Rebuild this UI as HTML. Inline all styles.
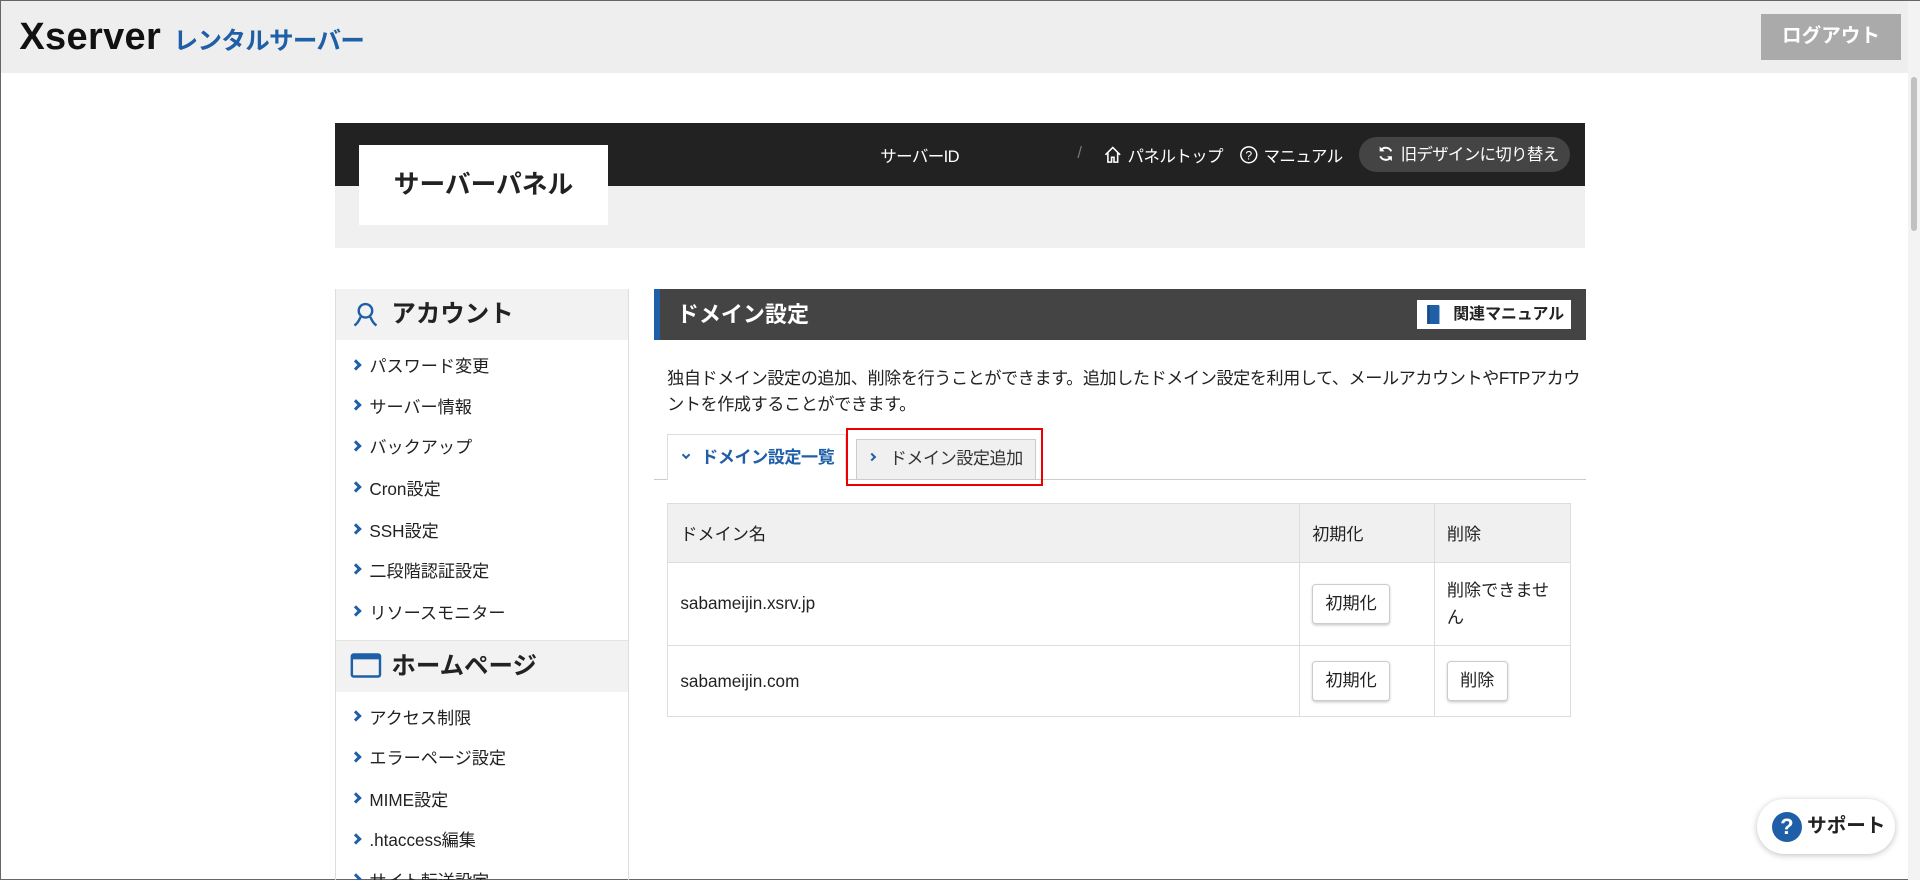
<!DOCTYPE html>
<html><head><meta charset="utf-8">
<style>
html{zoom:1.2245;overflow:hidden}
*{box-sizing:border-box;margin:0;padding:0}
body{width:1568px;height:719px;overflow:hidden;position:relative;background:#fff;font-family:"Liberation Sans","Noto Sans CJK JP",sans-serif;color:#222;border:1px solid #666}
.a{position:absolute;white-space:nowrap}
.hdr{left:0;top:0;width:1568px;height:59px;background:#eee}
.logo{left:15px;top:12px;font-size:31px;font-weight:bold;color:#111;letter-spacing:0.3px}
.logo2{left:141px;top:17px;font-size:20px;font-weight:bold;color:#1f5fa8;letter-spacing:-0.5px}
.logout{left:1437px;top:11px;width:115px;height:37px;background:#aaa;color:#fff;font-weight:bold;font-size:16px;text-align:center;line-height:37px}
.scroll{left:1557px;top:0;width:10px;height:719px;background:#f3f3f3}
.thumb{left:1560px;top:62px;width:5px;height:126px;background:#c1c1c1;border-radius:3px}
.dark{left:273px;top:100px;width:1021px;height:51px;background:#222}
.lg{left:273px;top:151px;width:1021px;height:51px;background:#f0f0f0}
.sp{left:292px;top:118px;width:204px;height:65px;background:#fff;font-size:21px;font-weight:bold;text-align:center;line-height:66px;color:#222}
.nav{color:#fff;font-size:13.5px;top:116px;letter-spacing:-0.5px}
.oldbtn{left:1109px;top:111px;width:172px;height:29px;background:#444;border-radius:15px;color:#fff;font-size:13.5px;line-height:29px;padding-left:34px;letter-spacing:-0.6px}
.side{left:273px;top:235px;width:240px;height:500px;border:1px solid #ddd;border-top:none}
.sh{position:absolute;left:0;width:238px;height:42px;background:#f2f2f2;font-size:20px;font-weight:bold;line-height:42px;padding-left:45px}
.it{position:absolute;left:27px;font-size:14px;color:#222;white-space:nowrap}
.it:before{content:"";position:absolute;left-14px;left:-14px;top:7px;width:4px;height:4px;border-right:2.5px solid #1f5fa8;border-bottom:2.5px solid #1f5fa8;transform:rotate(-45deg)}
.title{left:533px;top:235px;width:761px;height:42px;background:#444;border-left:5px solid #1f5fa8;color:#fff;font-size:18px;font-weight:bold;line-height:42px;padding-left:14px}
.man{left:1156px;top:244px;width:126px;height:24px;background:#fff;font-size:13px;font-weight:bold;line-height:24px;padding-left:30px;color:#222}
.desc{left:544px;top:298px;width:748px;font-size:14px;line-height:21px;color:#222;letter-spacing:-0.35px;white-space:normal}
.tab1{left:544px;top:354px;width:146px;height:37px;background:#fff;border:1px solid #ddd;border-bottom:none;color:#1f5fa8;font-weight:bold;font-size:14px;line-height:36px;padding-left:27px;letter-spacing:-0.4px}
.tab2{left:698px;top:358px;width:147px;height:32px;background:#f0f0f0;border:1px solid #ccc;border-bottom:none;font-size:14px;line-height:31px;padding-left:27px;color:#333;letter-spacing:-0.4px}
.tline{left:533px;top:390px;width:761px;height:1px;background:#ccc}
.red{left:690px;top:349px;width:161px;height:47px;border:2px solid #e00}
table{position:absolute;left:544px;top:410px;width:738px;border-collapse:collapse;font-size:14px}
td{border:1px solid #ddd;padding:0 10px;vertical-align:middle;color:#222}
.btn{display:inline-block;border:1px solid #ccc;border-radius:3px;background:#fff;box-shadow:0 1px 2px rgba(0,0,0,.2);height:32px;line-height:30px;padding:0 10px;font-size:14px}
.sup{left:1434px;top:652px;width:113px;height:45px;background:#fff;border-radius:23px;box-shadow:0 1px 5px rgba(0,0,0,.25);font-size:16px;font-weight:bold;line-height:45px;padding-left:41px}
.q{position:absolute;left:12px;top:10px;width:25px;height:25px;border-radius:50%;background:#1f5fa8;color:#fff;font-size:18px;line-height:25px;text-align:center}
</style></head><body>
<div class="a hdr"></div>
<div class="a logo">Xserver</div>
<div class="a logo2">レンタルサーバー</div>
<div class="a logout">ログアウト</div>
<div class="a scroll"></div><div class="a thumb"></div>

<div class="a dark"></div>
<div class="a lg"></div>
<div class="a sp">サーバーパネル</div>
<div class="a nav" style="left:718px">サーバーID</div>
<div class="a nav" style="left:879px;color:#777">/</div>
<svg class="a" style="left:900px;top:118px" width="16" height="16" viewBox="0 0 16 16"><path d="M2 8 L8 2 L14 8 M4 6.5 V14 H7 V10 H9 V14 H12 V6.5" fill="none" stroke="#fff" stroke-width="1.3"/></svg>
<div class="a nav" style="left:920px">パネルトップ</div>
<svg class="a" style="left:1011px;top:118px" width="16" height="16" viewBox="0 0 16 16"><circle cx="8" cy="8" r="6.5" fill="none" stroke="#fff" stroke-width="1.2"/><text x="8" y="12" font-size="10" fill="#fff" text-anchor="middle" font-family="Liberation Sans">?</text></svg>
<div class="a nav" style="left:1031px">マニュアル</div>
<div class="a oldbtn">旧デザインに切り替え</div>
<svg class="a" style="left:1123px;top:117px" width="16" height="16" viewBox="0 0 16 16"><path d="M12.5 6 A5 5 0 0 0 4 5 M3.5 10 A5 5 0 0 0 12 11" fill="none" stroke="#fff" stroke-width="1.6"/><path d="M3 2 V6 H7 Z M13 14 V10 H9 Z" fill="#fff"/></svg>

<div class="a side">
 <div class="sh" style="top:0">アカウント</div>
 <svg style="position:absolute;left:13px;top:10px" width="22" height="22" viewBox="0 0 22 22"><circle cx="11" cy="8" r="5.5" fill="none" stroke="#1f5fa8" stroke-width="2"/><path d="M7 13 Q5 18 2 20 M15 13 Q17 18 20 20" fill="none" stroke="#1f5fa8" stroke-width="2"/></svg>
 <div class="it" style="top:52px">パスワード変更</div>
 <div class="it" style="top:85px">サーバー情報</div>
 <div class="it" style="top:118px">バックアップ</div>
 <div class="it" style="top:152px">Cron設定</div>
 <div class="it" style="top:186px">SSH設定</div>
 <div class="it" style="top:219px">二段階認証設定</div>
 <div class="it" style="top:253px">リソースモニター</div>
 <div class="sh" style="top:287px;border-top:1px solid #e4e4e4">ホームページ</div>
 <svg style="position:absolute;left:11px;top:297px" width="26" height="22" viewBox="0 0 26 22"><rect x="1.5" y="2" width="23" height="18" rx="1.5" fill="none" stroke="#1f5fa8" stroke-width="2"/><rect x="1.5" y="2" width="23" height="4" fill="#1f5fa8"/></svg>
 <div class="it" style="top:339px">アクセス制限</div>
 <div class="it" style="top:372px">エラーページ設定</div>
 <div class="it" style="top:406px">MIME設定</div>
 <div class="it" style="top:439px">.htaccess編集</div>
 <div class="it" style="top:472px">サイト転送設定</div>
</div>

<div class="a title">ドメイン設定</div>
<div class="a man">関連マニュアル</div>
<svg class="a" style="left:1164px;top:248px" width="12" height="16" viewBox="0 0 12 16"><rect x="1" y="0" width="10" height="16" rx="1" fill="#1f5fa8"/><rect x="1" y="0" width="2" height="16" fill="#174a85"/></svg>
<div class="a desc">独自ドメイン設定の追加、削除を行うことができます。追加したドメイン設定を利用して、メールアカウントやFTPアカウントを作成することができます。</div>
<div class="a tline"></div>
<div class="a tab1">ドメイン設定一覧</div>
<div class="a" style="left:557px;top:368px;width:5px;height:5px;border-right:2px solid #1f5fa8;border-bottom:2px solid #1f5fa8;transform:rotate(45deg)"></div>
<div class="a tab2">ドメイン設定追加</div>
<div class="a" style="left:709px;top:370px;width:5px;height:5px;border-right:2px solid #1f5fa8;border-bottom:2px solid #1f5fa8;transform:rotate(-45deg)"></div>
<div class="a red"></div>

<table>
<tr style="height:48px;background:#f0f0f0"><td style="width:516px">ドメイン名</td><td style="width:110px">初期化</td><td>削除</td></tr>
<tr style="height:68px"><td>sabameijin.xsrv.jp</td><td><span class="btn">初期化</span></td><td style="line-height:22px">削除できません</td></tr>
<tr style="height:58px"><td>sabameijin.com</td><td><span class="btn">初期化</span></td><td><span class="btn">削除</span></td></tr>
</table>

<div class="a sup"><div class="q">?</div>サポート</div>
</body></html>
